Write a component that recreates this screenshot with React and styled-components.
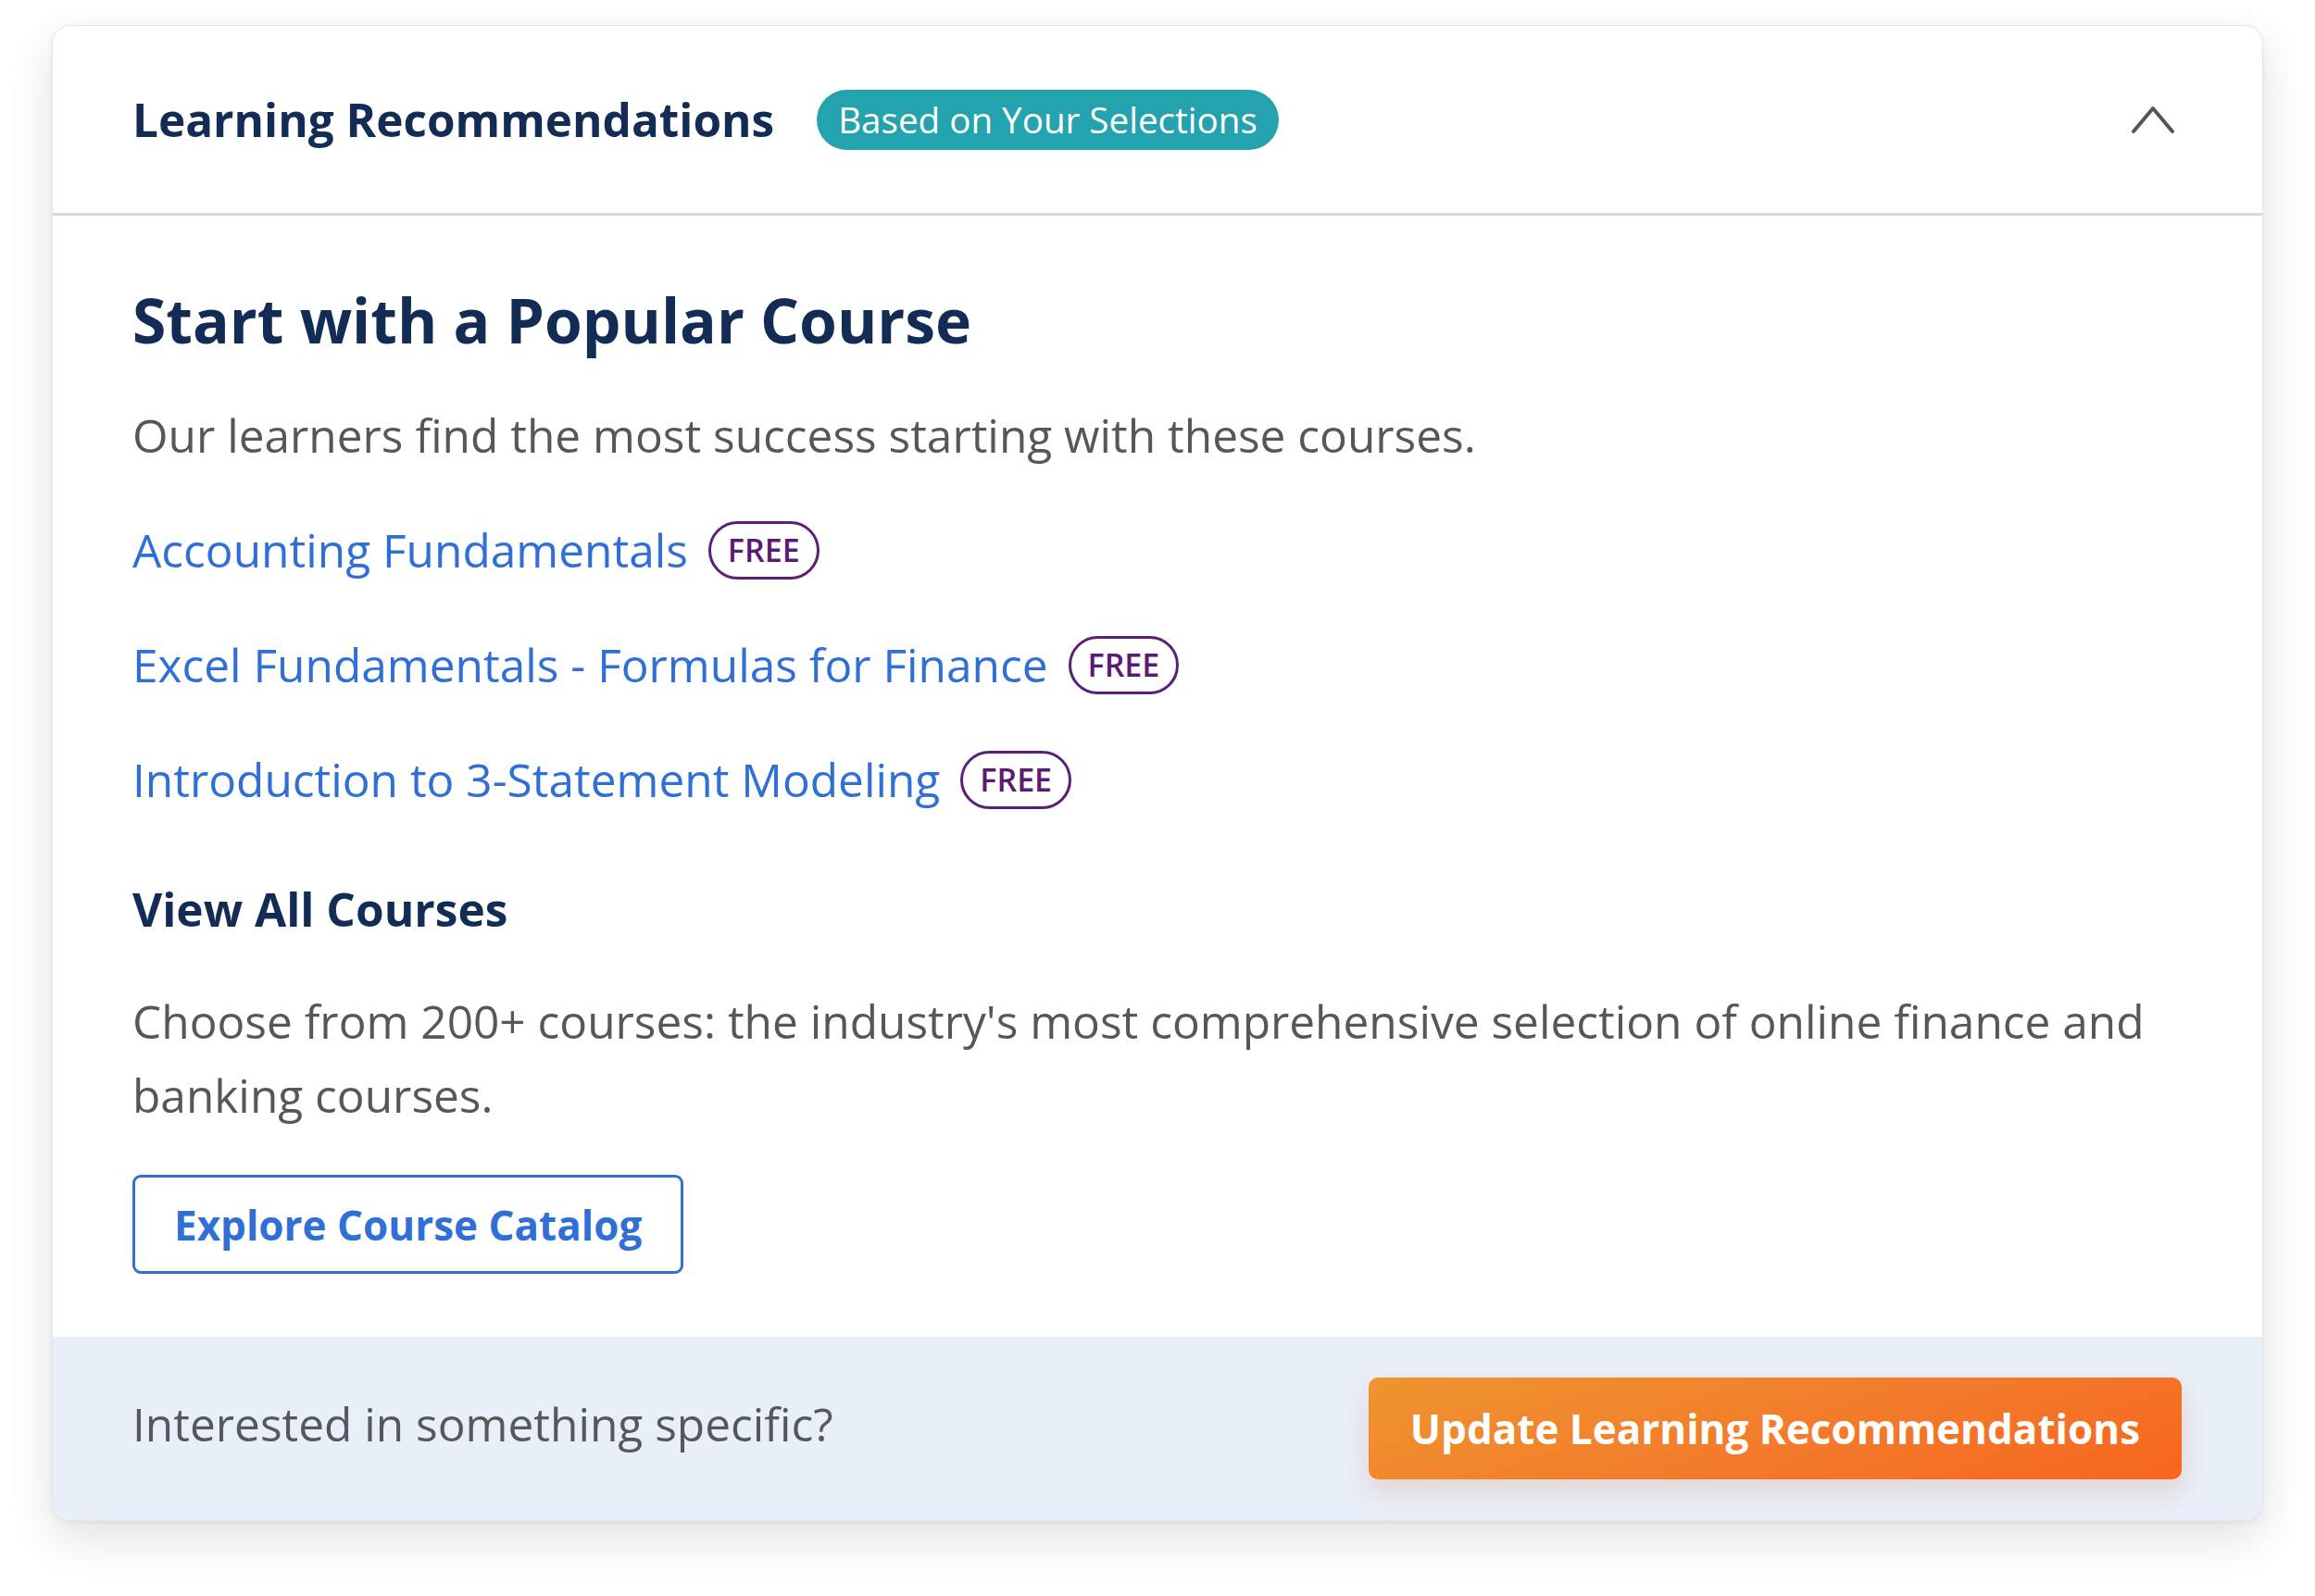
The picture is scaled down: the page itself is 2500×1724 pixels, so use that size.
import React from "react";
import styled, { createGlobalStyle } from "styled-components";

const GlobalStyle = createGlobalStyle`
  html, body { margin: 0; padding: 0; background: #ffffff; }
  body { font-family: "Open Sans", "Noto Sans", sans-serif; }
  * { box-sizing: border-box; }
`;

const Page = styled.div`
  padding: 27px 56px 0 56px;
  min-height: 1724px;
`;

const Card = styled.section`
  background: #ffffff;
  border: 1px solid #e6e6e6;
  border-radius: 20px;
  overflow: hidden;
  box-shadow: 0 18px 50px rgba(0, 0, 0, 0.12), 0 2px 6px rgba(0, 0, 0, 0.05);
`;

const Header = styled.header`
  display: flex;
  align-items: center;
  height: 205px;
  padding: 0 93px 0 86px;
  border-bottom: 3px solid #d9d9d9;
`;

const HeaderTitle = styled.h3`
  margin: 0;
  font-size: 49.5px;
  font-weight: 700;
  color: #132c55;
  line-height: 1.3;
`;

const Badge = styled.span`
  margin-left: 46px;
  display: inline-flex;
  align-items: center;
  height: 65px;
  padding: 0 23px;
  border-radius: 40px;
  background: #24a3ae;
  color: #ffffff;
  font-size: 38.6px;
  font-weight: 400;
`;

const Toggle = styled.button`
  margin-left: auto;
  background: none;
  border: 0;
  padding: 0;
  display: flex;
  cursor: pointer;
`;

const Body = styled.div`
  padding: 73px 87px 68px 86px;
`;

const Heading = styled.h2`
  margin: 0;
  font-size: 66px;
  line-height: 1.2;
  font-weight: 700;
  color: #132c55;
`;

const Text = styled.p`
  margin: ${(p) => p.$mt || 0}px 0 0 0;
  font-size: 49.6px;
  line-height: 80px;
  color: #55575c;
`;

const CourseList = styled.ul`
  list-style: none;
  margin: 44px 0 0 0;
  padding: 0;
  display: flex;
  flex-direction: column;
  gap: 44px;
`;

const CourseRow = styled.li`
  display: flex;
  align-items: center;
  height: 80px;
  gap: 22px;
`;

const CourseLink = styled.a`
  font-size: 49.6px;
  line-height: 80px;
  color: #2f6fd6;
  text-decoration: none;
`;

const FreePill = styled.span`
  display: inline-flex;
  align-items: center;
  height: 63px;
  padding: 0 18px;
  border: 3px solid #5b1f78;
  border-radius: 40px;
  color: #5b1a73;
  font-size: 34px;
  font-weight: 600;
`;

const SubHeading = styled.h4`
  margin: 60px 0 0 0;
  font-size: 49.6px;
  line-height: 80px;
  font-weight: 700;
  color: #132c55;
`;

const OutlineButton = styled.a`
  margin-top: 46px;
  display: inline-flex;
  align-items: center;
  height: 107px;
  padding: 0 42px;
  border: 3px solid #2f6fd6;
  border-radius: 9px;
  color: #2f6fd6;
  font-size: 44px;
  font-weight: 700;
  text-decoration: none;
`;

const Footer = styled.footer`
  display: flex;
  align-items: center;
  justify-content: space-between;
  height: 198px;
  padding: 0 87px 0 86px;
  background: #e9eff8;
`;

const FooterText = styled.span`
  font-size: 49.6px;
  line-height: 80px;
  color: #55575c;
  margin-top: -10px;
`;

const PrimaryButton = styled.button`
  display: inline-flex;
  align-items: center;
  height: 110px;
  padding: 0 45px;
  border: 0;
  border-radius: 10px;
  background: linear-gradient(160deg, #ee952f 0%, #f3782a 60%, #f7661d 100%);
  color: #ffffff;
  font-family: "Open Sans", "Noto Sans", sans-serif;
  font-size: 44px;
  font-weight: 700;
  box-shadow: 0 14px 30px rgba(200, 90, 40, 0.18);
  cursor: pointer;
`;

const courses = [
  "Accounting Fundamentals",
  "Excel Fundamentals - Formulas for Finance",
  "Introduction to 3-Statement Modeling",
];

export default function App() {
  return (
    <>
      <GlobalStyle />
      <Page>
        <Card>
          <Header>
            <HeaderTitle>Learning Recommendations</HeaderTitle>
            <Badge>Based on Your Selections</Badge>
            <Toggle aria-label="Collapse">
              <svg width="50" height="32" viewBox="0 0 50 32" fill="none">
                <polyline
                  points="4,29 25,4 46,29"
                  stroke="#555659"
                  strokeWidth="4"
                  strokeLinecap="round"
                  strokeLinejoin="round"
                />
              </svg>
            </Toggle>
          </Header>
          <Body>
            <Heading>Start with a Popular Course</Heading>
            <Text $mt={45}>Our learners find the most success starting with these courses.</Text>
            <CourseList>
              {courses.map((c) => (
                <CourseRow key={c}>
                  <CourseLink href="#">{c}</CourseLink>
                  <FreePill>FREE</FreePill>
                </CourseRow>
              ))}
            </CourseList>
            <SubHeading>View All Courses</SubHeading>
            <Text $mt={41}>
              Choose from 200+ courses: the industry's most comprehensive selection of online finance and banking courses.
            </Text>
            <OutlineButton href="#">Explore Course Catalog</OutlineButton>
          </Body>
          <Footer>
            <FooterText>Interested in something specific?</FooterText>
            <PrimaryButton>Update Learning Recommendations</PrimaryButton>
          </Footer>
        </Card>
      </Page>
    </>
  );
}
